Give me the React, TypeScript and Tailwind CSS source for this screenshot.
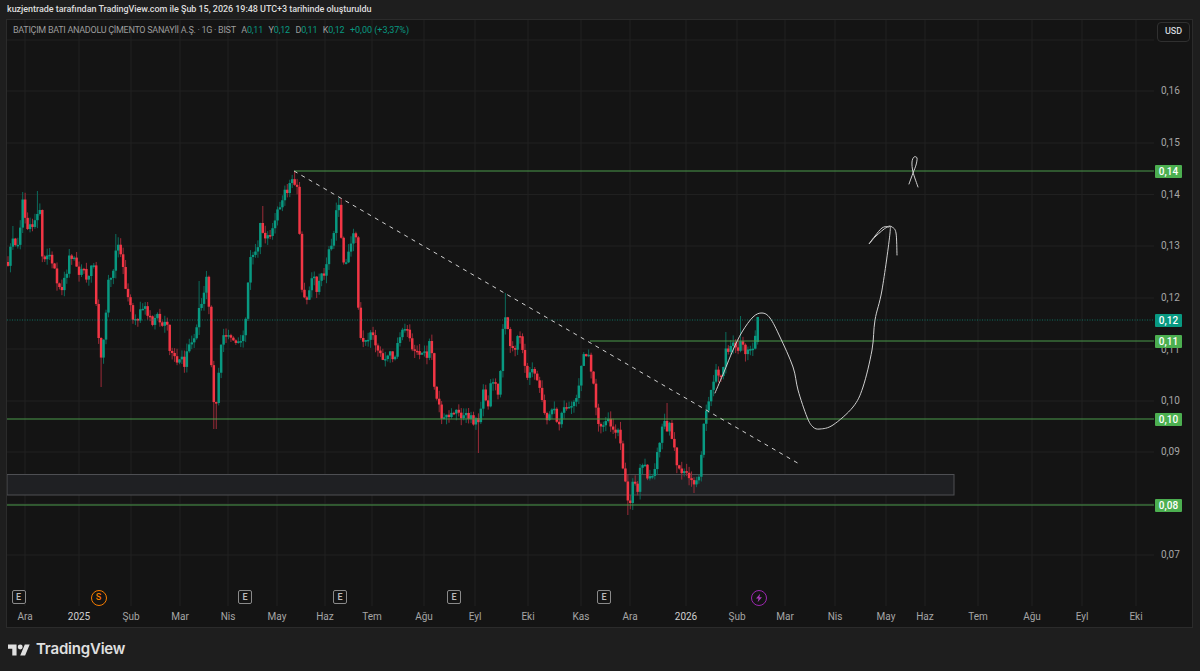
import React from "react";

const closePts: [number, number][] = [
[8,264],[12,233],[15,250],[20,233],[23,196],[26,222],[29,227],[33,223],[37,213],[40,207],[41,243],[43,257],[50,257],[55,270],[57,287],[62,288],[65,278],[70,255],[75,260],[80,273],[85,270],[87,283],[92,260],[93,257],[95,287],[98,333],[101,358],[105,332],[108,280],[113,277],[116,250],[119,248],[122,263],[126,288],[129,295],[133,317],[137,322],[142,308],[147,310],[152,323],[157,317],[163,327],[167,323],[168,343],[172,357],[177,363],[182,357],[185,370],[188,343],[193,345],[200,305],[205,290],[207,277],[209,311],[210,340],[212,373],[215,420],[217,390],[220,360],[222,333],[227,333],[233,337],[237,343],[240,333],[242,343],[245,327],[247,300],[250,260],[255,257],[257,235],[259,260],[260,218],[266,242],[272,233],[275,217],[280,207],[283,193],[290,187],[293,180],[296,182],[299,192],[300,263],[302,288],[304,300],[309,297],[313,270],[317,297],[320,277],[327,267],[328,248],[331,250],[333,235],[335,222],[338,200],[340,222],[343,262],[345,270],[348,257],[355,232],[357,240],[358,293],[359,330],[362,348],[367,337],[372,333],[377,347],[383,362],[388,353],[395,358],[398,343],[402,330],[407,330],[413,350],[417,347],[420,355],[427,355],[430,343],[432,350],[433,387],[438,400],[443,420],[448,413],[457,412],[462,417],[468,415],[473,422],[478,420],[483,393],[488,407],[490,388],[495,377],[499,397],[502,337],[505,318],[507,325],[510,350],[515,347],[520,333],[524,353],[526,383],[530,373],[533,365],[538,383],[542,403],[548,420],[553,403],[557,427],[562,413],[570,403],[578,397],[582,357],[587,352],[590,360],[593,380],[595,405],[598,425],[607,422],[613,427],[620,437],[622,463],[625,480],[628,497],[629,512],[632,487],[635,480],[638,498],[640,468],[643,463],[648,478],[653,477],[658,452],[663,422],[667,430],[670,422],[673,443],[678,470],[682,478],[685,467],[690,477],[695,483],[700,477],[703,430],[707,410],[710,395],[715,373],[722,377],[725,347],[730,350],[735,342],[737,358],[742,335],[745,355],[750,353],[755,340],[758,342],[759,317],
];
const extremes: [number, number][] = [[23,192],[37,191],[101,387],[215,429],[294,171],[338,198],[505,293],[478,453],[629,515],[668,403],[695,493],[740,316],[727,332],[262,206],[343,245],[12,226],[116,234],[200,281]];

function yAt(x: number) {
  for (let i = 1; i < closePts.length; i++) {
    const a = closePts[i - 1], b = closePts[i];
    if (x <= b[0]) return a[1] + ((b[1] - a[1]) * (x - a[0])) / Math.max(b[0] - a[0], 0.01);
  }
  return closePts[closePts.length - 1][1];
}
function rnd(i: number) {
  const s = Math.sin(i * 127.1 + 11.7) * 43758.5453;
  return s - Math.floor(s);
}
type Bar = { x: number; o: number; c: number; hi: number; lo: number };
const bars: Bar[] = [];
let prev = 262;
for (let i = 0; i * 2.45 + 8 <= 759.5; i++) {
  const x = 8 + i * 2.45;
  const isLast = x > 757.5;
  const c = isLast ? 317 : yAt(x) + (rnd(i) - 0.5) * 9;
  const o = isLast ? 342 : prev;
  let hi = Math.min(o, c) - rnd(i + 500) * 8;
  let lo = Math.max(o, c) + rnd(i + 900) * 8;
  for (const e of extremes) {
    if (Math.abs(e[0] - x) <= 1.3) {
      if (e[1] < hi) hi = e[1];
      if (e[1] > lo) lo = e[1];
    }
  }
  bars.push({ x, o, c, hi, lo });
  prev = c;
}

function smooth(p: [number, number][]) {
  let d = `M${p[0][0]} ${p[0][1]}`;
  for (let i = 0; i < p.length - 1; i++) {
    const a = p[Math.max(i - 1, 0)], b = p[i], c = p[i + 1], e = p[Math.min(i + 2, p.length - 1)];
    d += ` C${b[0] + (c[0] - a[0]) / 6} ${b[1] + (c[1] - a[1]) / 6} ${c[0] - (e[0] - b[0]) / 6} ${c[1] - (e[1] - b[1]) / 6} ${c[0]} ${c[1]}`;
  }
  return d;
}
const curve = smooth([[715,393],[724,372],[733,350],[742,332],[753,317],[762,313],[770,318],[780,337],[793,367],[798,390],[807,417],[813,427],[820,429],[833,425],[853,407],[863,387],[872,350],[875,320],[882,290],[890,233],[888,227],[882,228],[875,236],[869,244],[876,236],[887,227],[892,227],[896,233],[897,255]]);
const ribbon = smooth([[909,184],[913,173],[916,165],[917,158],[914,157],[912,162],[913,172],[918,187]]);

const hGrid = [40, 91, 143, 194.5, 246, 298, 349, 401, 452, 504, 555];
const vGrid = [25, 79, 131, 180, 228, 277, 325, 372, 424, 475, 528, 581, 630, 686, 737, 785, 835, 886, 925, 978, 1032, 1082, 1136];
const times: [string, number, boolean][] = [["Ara",25,false],["2025",79,true],["Şub",131,false],["Mar",180,false],["Nis",228,false],["May",277,false],["Haz",325,false],["Tem",372,false],["Ağu",424,false],["Eyl",475,false],["Eki",528,false],["Kas",581,false],["Ara",630,false],["2026",686,true],["Şub",737,false],["Mar",785,false],["Nis",835,false],["May",886,false],["Haz",925,false],["Tem",978,false],["Ağu",1032,false],["Eyl",1082,false],["Eki",1136,false]];
const prices: [string, number][] = [["0,16",91],["0,15",143],["0,14",194.5],["0,13",246],["0,12",298],["0,11",350],["0,10",401],["0,09",452],["0,07",555]];
const tags: [string, number, string][] = [["0,14",171,"bg-[#4caf50]"],["0,12",320,"bg-[#089981]"],["0,11",341,"bg-[#4caf50]"],["0,10",419,"bg-[#4caf50]"],["0,08",505,"bg-[#4caf50]"]];
const earnings = [18.5, 245, 340, 454, 604];

function ChartDrawing() {
  return (
    <svg className="absolute inset-0" width={1185} height={607} viewBox="7 20 1185 607">
      {hGrid.map((y) => <line key={y} x1={7} x2={1154} y1={y} y2={y} stroke="#202020" strokeWidth={1} />)}
      {vGrid.map((x) => <line key={x} x1={x} x2={x} y1={20} y2={606} stroke="#202020" strokeWidth={1} />)}
      <rect x={7} y={474.5} width={947} height={20.5} fill="#1f2023" stroke="#4e4f53" strokeWidth={1} />
      {bars.map((b, i) => {
        const up = b.c <= b.o;
        return (
          <g key={i}>
            <line x1={b.x} x2={b.x} y1={b.hi} y2={b.lo} stroke={up ? "#0b6b5c" : "#9c2b38"} strokeWidth={1} />
            <rect x={b.x - 1.25} y={Math.min(b.o, b.c)} width={2.5} height={Math.max(Math.abs(b.o - b.c), 1.5)} fill={up ? "#089981" : "#f23645"} />
          </g>
        );
      })}
      <line x1={7} x2={1154} y1={320} y2={320} stroke="#089981" strokeOpacity={0.7} strokeWidth={1} strokeDasharray="1 1.5" />
      <line x1={294} x2={1154} y1={171} y2={171} stroke="#4a9a4a" strokeWidth={1.2} />
      <line x1={590} x2={1154} y1={341} y2={341} stroke="#4a9a4a" strokeWidth={1.2} />
      <line x1={7} x2={1154} y1={419} y2={419} stroke="#4a9a4a" strokeWidth={1.2} />
      <line x1={7} x2={1154} y1={505} y2={505} stroke="#4a9a4a" strokeWidth={1.2} />
      <line x1={294} y1={171} x2={801} y2={465} stroke="#cfcfcf" strokeWidth={1} strokeDasharray="4 4.5" />
      <path d={curve} fill="none" stroke="#cfcfcf" strokeWidth={1} strokeLinecap="round" />
      <path d={ribbon} fill="none" stroke="#cfcfcf" strokeWidth={1} strokeLinecap="round" />
    </svg>
  );
}

export default function App() {
  const font = "font-['Roboto','Liberation_Sans',sans-serif]";
  return (
    <div className={`w-[1200px] h-[671px] flex flex-col bg-[#1e1e1e] overflow-hidden ${font}`}>
      <header className="h-[20px] flex items-center pl-[7px] text-[9px] tracking-[-0.05px] font-medium text-[#dcdcdc] whitespace-nowrap">
        kuzjentrade tarafından TradingView.com ile Şub 15, 2026 19:48 UTC+3 tarihinde oluşturuldu
      </header>
      <main className="relative mx-[7px] mr-[8px] h-[607px] bg-[#141414] outline outline-1 outline-[#2b2b2b]">
        <ChartDrawing />
        <div className="absolute left-[6px] top-[3px] flex items-center gap-[5.5px] text-[9px] leading-[14px] text-[#9c9c9c] whitespace-nowrap">
          <span className="tracking-[-0.28px]">BATIÇIM BATI ANADOLU ÇİMENTO SANAYİİ A.Ş. · 1G · BIST</span>
          <span className="tracking-[-0.2px]">A<span className="text-[#089981]">0,11</span></span>
          <span className="tracking-[-0.2px]">Y<span className="text-[#089981]">0,12</span></span>
          <span className="tracking-[-0.2px]">D<span className="text-[#089981]">0,11</span></span>
          <span className="tracking-[-0.2px]">K<span className="text-[#089981]">0,12</span></span>
          <span className="text-[#089981]">+0,00 (+3,37%)</span>
        </div>
        <div className="absolute left-[1150px] top-[2px] w-[33px] h-[20px] flex items-center justify-center rounded-[4px] border border-[#303030] bg-[#141414] text-[9px] font-medium text-[#d1d4dc]">USD</div>
        {prices.map(([t, y]) => (
          <span key={y} className="absolute left-[1154px] text-[10px] leading-[12px] text-[#a6a6a6]" style={{ top: y - 26 }}>{t}</span>
        ))}
        {tags.map(([t, y, bg]) => (
          <span key={y} className={`absolute left-[1148px] w-[27px] h-[13px] flex items-center justify-center rounded-[1px] text-[10px] font-medium text-white ${bg}`} style={{ top: y - 26.5 }}>{t}</span>
        ))}
        {earnings.map((x) => (
          <span key={x} className="absolute top-[570px] w-[14px] h-[14px] flex items-center justify-center rounded-[2px] border-[1.5px] border-[#8a8a8a] bg-[#141414] text-[9px] font-medium leading-none text-[#bdbdbd]" style={{ left: x - 14 }}>E</span>
        ))}
        <span className="absolute left-[83.5px] top-[569.5px] w-[16px] h-[16px] flex items-center justify-center rounded-full border-[1.5px] border-[#f57c00] text-[9px] font-medium leading-none text-[#f57c00]">S</span>
        <span className="absolute left-[744px] top-[569.5px] w-[16px] h-[16px] flex items-center justify-center rounded-full border-[1.5px] border-[#9c27b0]">
          <svg width="10" height="10" viewBox="0 0 10 10"><path d="M6.2 0.8 L2 5.6 H4.6 L3.6 9.2 L8 4.2 H5.3 Z" fill="#a93cbc" /></svg>
        </span>
        {times.map(([t, x, bold], i) => (
          <span key={i} className={`absolute top-[590px] -translate-x-1/2 text-[10px] leading-[13px] ${bold ? "text-[#cfcfcf]" : "text-[#a6a6a6]"}`} style={{ left: x - 7 }}>{t}</span>
        ))}
      </main>
      <footer className="flex-1 flex items-center gap-[6px] pl-[8px] pt-[1px]">
        <svg width="22" height="14" viewBox="0 0 36 22" fill="#e0e0e0">
          <path d="M14 20H7V9H0V2h14v18zM28 20h-8L27.5 2h8L28 20z" />
          <circle cx="20" cy="6" r="4" />
        </svg>
        <span className="font-['Inter','Liberation_Sans',sans-serif] text-[15px] font-semibold text-[#e0e0e0] tracking-[-0.2px]">TradingView</span>
      </footer>
    </div>
  );
}
